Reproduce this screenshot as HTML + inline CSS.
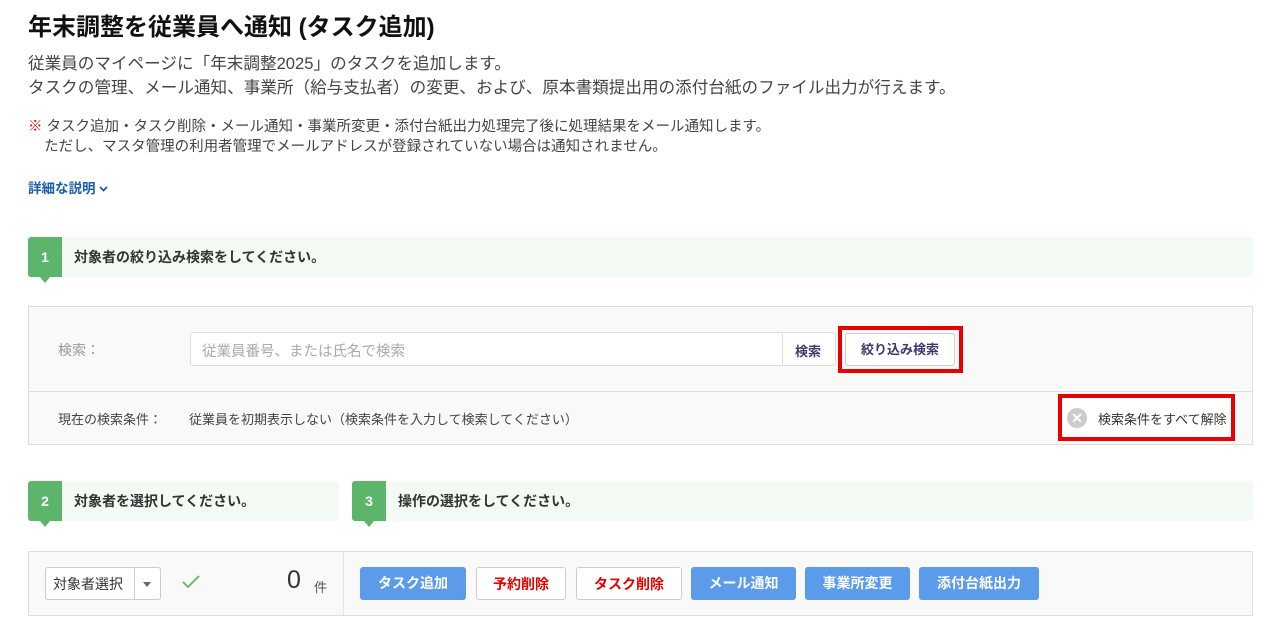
<!DOCTYPE html>
<html><head><meta charset="utf-8"><style>
*{box-sizing:border-box;margin:0;padding:0}
body{width:1280px;height:633px;background:#fff;font-family:"Liberation Sans","Noto Sans CJK JP",sans-serif;color:#333;position:relative;overflow:hidden}
.a{position:absolute;white-space:nowrap}
.bar{position:absolute;background:#f3f9f3;border-radius:3px}
.badge{position:absolute;left:0;top:0;width:34px;height:40px;background:#5cb56a;color:#fff;font-weight:bold;font-size:14px;text-align:center;line-height:40px;border-radius:3px 0 0 3px}
.badge:after{content:"";position:absolute;left:12px;top:40px;border:5px solid transparent;border-top:6px solid #5cb56a}
.bt{position:absolute;left:46px;top:0;line-height:40px;font-size:14px;font-weight:bold;color:#333}
.btn{position:absolute;top:567px;height:33px;border-radius:3px;font-size:14px;font-weight:bold;text-align:center;line-height:33px}
.bl{background:#5b9bea;color:#fff}
.wh{background:#fff;border:1px solid #ccc;color:#e60000}
</style></head><body>
<div class="a" style="left:28px;top:7px;font-size:24px;font-weight:bold;color:#111">年末調整を従業員へ通知 (タスク追加)</div>
<div class="a" style="left:28px;top:52px;font-size:16.6px;line-height:24px;color:#444">従業員のマイページに「年末調整2025」のタスクを追加します。<br>タスクの管理、メール通知、事業所（給与支払者）の変更、および、原本書類提出用の添付台紙のファイル出力が行えます。</div>
<div class="a" style="left:28px;top:117px;font-size:14.5px;line-height:20px;color:#444"><span style="color:#e60000">※</span> タスク追加・タスク削除・メール通知・事業所変更・添付台紙出力処理完了後に処理結果をメール通知します。<br>&nbsp;&nbsp;&nbsp; ただし、マスタ管理の利用者管理でメールアドレスが登録されていない場合は通知されません。</div>
<div class="a" style="left:28px;top:177px;font-size:13.5px;font-weight:bold;color:#1a5fa8">詳細な説明 <svg width="9" height="6" viewBox="0 0 9 6" style="vertical-align:middle"><path d="M1 1l3.5 3.5L8 1" fill="none" stroke="#1a5fa8" stroke-width="1.8"/></svg></div>

<div class="bar" style="left:28px;top:237px;width:1225px;height:40px"><div class="badge">1</div><div class="bt">対象者の絞り込み検索をしてください。</div></div>

<div class="a" style="left:28px;top:306px;width:1225px;height:139px;background:#f9f9f9;border:1px solid #ddd"></div>
<div class="a" style="left:29px;top:391px;width:1223px;height:1px;background:#ddd"></div>
<div class="a" style="left:58px;top:340px;font-size:14px;color:#999">検索：</div>
<div class="a" style="left:190px;top:332px;width:646px;height:34px;background:#fff;border:1px solid #ddd;border-radius:3px"></div>
<div class="a" style="left:202px;top:340px;font-size:14.5px;color:#aaa">従業員番号、または氏名で検索</div>
<div class="a" style="left:782px;top:333px;width:1px;height:32px;background:#ddd"></div>
<div class="a" style="left:795px;top:341px;font-size:13px;font-weight:bold;color:#3c3c6c">検索</div>
<div class="a" style="left:838px;top:326px;width:125px;height:47px;border:4px solid #e60000"></div>
<div class="a" style="left:845px;top:333px;width:110px;height:33px;background:#fff;border:1px solid #ccc;border-radius:3px;font-size:13px;font-weight:bold;color:#3c3c6c;text-align:center;line-height:31px">絞り込み検索</div>
<div class="a" style="left:58px;top:409px;font-size:13px;color:#444">現在の検索条件：</div>
<div class="a" style="left:189px;top:409px;font-size:13px;color:#444">従業員を初期表示しない（検索条件を入力して検索してください）</div>
<div class="a" style="left:1058px;top:394px;width:177px;height:47px;border:4px solid #e60000;background:#fff"></div>
<div class="a" style="left:1067px;top:408px;width:20px;height:20px;border-radius:50%;background:#ccc;color:#fff;font-size:14px;text-align:center;line-height:20px;font-weight:bold">✕</div>
<div class="a" style="left:1098px;top:409px;font-size:13px;color:#333">検索条件をすべて解除</div>

<div class="bar" style="left:28px;top:481px;width:311px;height:40px"><div class="badge">2</div><div class="bt">対象者を選択してください。</div></div>
<div class="bar" style="left:352px;top:481px;width:901px;height:40px"><div class="badge">3</div><div class="bt">操作の選択をしてください。</div></div>

<div class="a" style="left:28px;top:551px;width:1225px;height:65px;background:#f9f9f9;border:1px solid #ddd"></div>
<div class="a" style="left:343px;top:552px;width:1px;height:63px;background:#e5e5e5"></div>
<div class="a" style="left:45px;top:567px;width:116px;height:33px;background:#fff;border:1px solid #ccc;border-radius:3px"></div>
<div class="a" style="left:53px;top:574px;font-size:14px;color:#333">対象者選択</div>
<div class="a" style="left:134px;top:568px;width:1px;height:31px;background:#ccc"></div>
<div class="a" style="left:143px;top:582px;border:4px solid transparent;border-top:5px solid #666"></div>
<svg class="a" style="left:182px;top:575px" width="18" height="14" viewBox="0 0 18 14"><path d="M1 7l5 5L17 1" fill="none" stroke="#5cb56a" stroke-width="1.8"/></svg>
<div class="a" style="left:287px;top:566px;font-size:25px;color:#333">0</div>
<div class="a" style="left:314px;top:577px;font-size:13px;color:#555">件</div>
<div class="btn bl" style="left:360px;width:106px">タスク追加</div>
<div class="btn wh" style="left:476px;width:90px">予約削除</div>
<div class="btn wh" style="left:576px;width:106px">タスク削除</div>
<div class="btn bl" style="left:691px;width:105px">メール通知</div>
<div class="btn bl" style="left:805px;width:105px">事業所変更</div>
<div class="btn bl" style="left:919px;width:120px">添付台紙出力</div>
</body></html>
